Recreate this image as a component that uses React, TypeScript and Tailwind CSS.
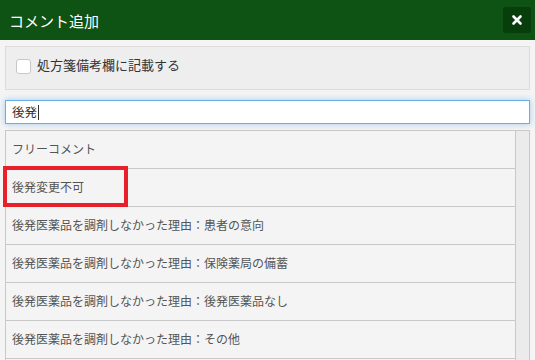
import { X } from "lucide-react";

const rows = [
  "フリーコメント",
  "後発変更不可",
  "後発医薬品を調剤しなかった理由：患者の意向",
  "後発医薬品を調剤しなかった理由：保険薬局の備蓄",
  "後発医薬品を調剤しなかった理由：後発医薬品なし",
  "後発医薬品を調剤しなかった理由：その他",
  "",
];

export default function App() {
  return (
    <div
      className="h-[360px] w-[535px] overflow-hidden bg-[#f4f4f4]"
      style={{ fontFamily: '"Noto Sans CJK JP", "Noto Sans", sans-serif' }}
    >
      <header className="flex h-10 items-center justify-between bg-[#0e5214] pl-[9px] pr-[4px]">
        <h1 className="text-[15px] leading-none text-white">コメント追加</h1>
        <button className="flex h-[26px] w-[28px] items-center justify-center rounded-[3px] bg-[#083d0c] text-white">
          <X size={14} strokeWidth={4.5} />
        </button>
      </header>

      <div className="px-[5px] pt-[6px]">
        <label className="flex h-[44px] items-start gap-[6px] border border-[#dcdcdc] bg-[#eeeeee] pl-[10px] pt-[12px]">
          <span className="h-[15px] w-[15px] rounded-[3px] border border-[#c8c8c8] bg-white" />
          <span className="-mt-[2px] text-[13px] leading-[16px] text-[#333]">処方箋備考欄に記載する</span>
        </label>

        <div className="mt-[10px] flex h-[24px] items-center border border-[#66afe9] bg-white pl-[6px] shadow-[0_0_6px_rgba(102,175,233,0.6)]">
          <span className="text-[12.5px] leading-none text-[#333]">後発</span>
          <span className="ml-[1px] h-[15px] w-px bg-[#333]" />
        </div>

        <div className="mt-[6px] flex border border-[#c8c8c8]">
          <ul className="flex-1">
            {rows.map((r, i) => (
              <li
                key={i}
                className="relative flex h-[38px] items-center border-b border-[#c8c8c8] bg-[#f4f4f4] pb-[2px] pl-[6px] text-[12px] text-[#555]"
              >
                {r}
                {i === 1 && (
                  <span className="absolute left-[-3px] top-[-3px] h-[41px] w-[125px] border-4 border-[#e8202a]" />
                )}
              </li>
            ))}
          </ul>
          <div className="w-[14px] border-l border-[#c8c8c8] bg-[#ebebeb]" />
        </div>
      </div>
    </div>
  );
}
